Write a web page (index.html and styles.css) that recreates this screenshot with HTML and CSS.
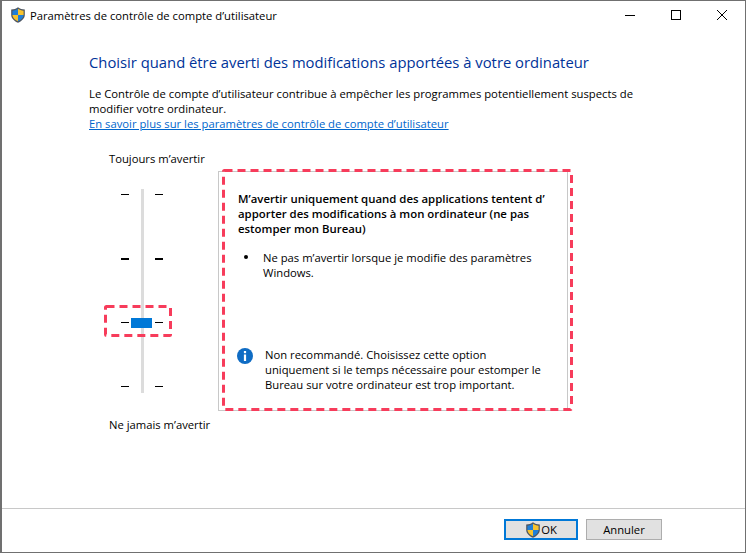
FILE: index.html
```html
<!DOCTYPE html>
<html lang="fr">
<head>
  <meta charset="UTF-8" />
  <title>Paramètres de contrôle de compte d’utilisateur</title>
  <link rel="stylesheet" href="styles.css">
</head>
<body>

  <div class="window">
    <header class="titlebar">
      <svg class="shield" viewBox="0 0 16 16" xmlns="http://www.w3.org/2000/svg">
        <path d="M8 .3 C6 1.8 4 2.4 1.2 2.6 V8 C1.2 11.5 4.5 14.2 8 15.8 C11.5 14.2 14.8 11.5 14.8 8 V2.6 C12 2.4 10 1.8 8 .3 Z" fill="#4d5560"/>
        <path d="M8 1.8 V8 H2.4 V3.7 C4.6 3.5 6.4 3 8 1.8 Z" fill="#1f7fd8"/>
        <path d="M8 1.8 C9.6 3 11.4 3.5 13.6 3.7 V8 H8 Z" fill="#f7c32e"/>
        <path d="M2.4 8 H8 V14.3 C5 12.9 2.6 10.9 2.4 8 Z" fill="#f7c32e"/>
        <path d="M8 8 H13.6 C13.4 10.9 11 12.9 8 14.3 Z" fill="#1f7fd8"/>
      </svg>
      <span class="title">Paramètres de contrôle de compte d’utilisateur</span>
      <div class="controls">
        <svg class="ctl" viewBox="0 0 10 10"><path d="M0 5.5 H10" stroke="#000" fill="none"/></svg>
        <svg class="ctl" viewBox="0 0 10 10"><rect x=".5" y=".5" width="9" height="9" stroke="#000" fill="none"/></svg>
        <svg class="ctl" viewBox="0 0 10 10"><path d="M0 0 L10 10 M10 0 L0 10" stroke="#000" fill="none"/></svg>
      </div>
    </header>

    <main class="content">
      <h1>Choisir quand être averti des modifications apportées à votre ordinateur</h1>
      <p class="intro">Le Contrôle de compte d’utilisateur contribue à empêcher les programmes potentiellement suspects de modifier votre ordinateur.</p>
      <a class="learn" href="#">En savoir plus sur les paramètres de contrôle de compte d’utilisateur</a>

      <div class="settings">
        <div class="slider">
          <div class="slider-label">Toujours m’avertir</div>
          <div class="slider-body">
            <div class="track"></div>
            <div class="ticks">
              <div class="tick-row"><i></i><i></i></div>
              <div class="tick-row bold"><i></i><i></i></div>
              <div class="tick-row"><i></i><i></i></div>
              <div class="tick-row"><i></i><i></i></div>
            </div>
            <div class="thumb"></div>
            <svg class="mark mark-thumb" viewBox="0 0 68 32"><rect x="1.5" y="1.5" width="65" height="29" rx="1"/></svg>
          </div>
          <div class="slider-label">Ne jamais m’avertir</div>
        </div>

        <section class="panel">
          <svg class="mark mark-panel" viewBox="0 0 351 242"><rect x="1.5" y="1.5" width="348" height="239" rx="1"/></svg>
          <h2>M’avertir uniquement quand des applications tentent d’ apporter des modifications à mon ordinateur (ne pas estomper mon Bureau)</h2>
          <ul>
            <li>Ne pas m’avertir lorsque je modifie des paramètres Windows.</li>
          </ul>
          <div class="note">
            <svg class="info" viewBox="0 0 16 16" xmlns="http://www.w3.org/2000/svg">
              <circle cx="8" cy="8" r="8" fill="#0f6cc4"/>
              <rect x="6.9" y="3" width="2.2" height="2.2" fill="#fff"/>
              <rect x="6.9" y="6.5" width="2.2" height="6.5" fill="#fff"/>
            </svg>
            <p>Non recommandé. Choisissez cette option uniquement si le temps nécessaire pour estomper le Bureau sur votre ordinateur est trop important.</p>
          </div>
        </section>
      </div>
    </main>

    <footer class="footer">
      <button class="btn btn-default">
        <svg class="shield" viewBox="0 0 16 16" xmlns="http://www.w3.org/2000/svg">
          <path d="M8 .3 C6 1.8 4 2.4 1.2 2.6 V8 C1.2 11.5 4.5 14.2 8 15.8 C11.5 14.2 14.8 11.5 14.8 8 V2.6 C12 2.4 10 1.8 8 .3 Z" fill="#4d5560"/>
          <path d="M8 1.8 V8 H2.4 V3.7 C4.6 3.5 6.4 3 8 1.8 Z" fill="#1f7fd8"/>
          <path d="M8 1.8 C9.6 3 11.4 3.5 13.6 3.7 V8 H8 Z" fill="#f7c32e"/>
          <path d="M2.4 8 H8 V14.3 C5 12.9 2.6 10.9 2.4 8 Z" fill="#f7c32e"/>
          <path d="M8 8 H13.6 C13.4 10.9 11 12.9 8 14.3 Z" fill="#1f7fd8"/>
        </svg>OK</button>
      <button class="btn">Annuler</button>
    </footer>
  </div>

</body>
</html>
```

FILE: styles.css
```css
/* Base */
*, *::before, *::after { box-sizing: border-box; margin: 0; padding: 0; }
html, body { height: 100%; }
body {
  font-family: 'Open Sans', sans-serif;
  font-size: 11.25px;
  color: #000;
  background: #fff;
  overflow: hidden;
}

/* Window */
.window {
  display: flex;
  flex-direction: column;
  width: 746px;
  height: 553px;
  background: #fff;
  border: 1px solid #707070;
  border-left-width: 2px;
}

/* Title bar */
.titlebar {
  display: flex;
  align-items: center;
  height: 28px;
  padding-left: 8px;
}
.titlebar .shield { width: 16px; height: 16px; margin-right: 4px; }
.title { font-size: 11.25px; flex: 1; }
.controls { display: flex; gap: 36px; padding-right: 18px; }
.ctl { width: 10px; height: 10px; display: block; }

/* Main content */
.content { flex: 1; padding: 23px 0 0 87px; }
h1 {
  font-size: 14.8px;
  font-weight: 400;
  color: #003399;
  line-height: 20px;
}
.intro { width: 570px; margin-top: 14px; font-size: 11.3px; line-height: 15px; }
.learn { display: block; line-height: 15px; color: #0066cc; }

/* Slider + description */
.settings { display: flex; margin-top: 20px; }
.slider { width: 129px; }
.slider-label { padding-left: 20px; line-height: 15px; }
.slider-body { position: relative; height: 204px; margin: 23px 0 24px; }
.track {
  width: 3px;
  height: 100%;
  margin-left: 52px;
  background: #dcdcdc;
}

/* Tick marks */
.ticks {
  position: absolute;
  top: 5px; left: 32px;
  display: flex;
  flex-direction: column;
  gap: 63px;
}
.tick-row { display: flex; gap: 26px; height: 1px; }
.tick-row i { width: 8px; height: 1px; background: #000; }
.tick-row.bold i { height: 2px; }

.thumb {
  position: absolute;
  top: 129px; left: 42px;
  width: 21px;
  height: 10px;
  background: #0078d7;
}

/* Red annotations */
.mark { position: absolute; fill: none; stroke: #f73c5b; stroke-width: 3; stroke-dasharray: 8 5; }
.mark-thumb { top: 116px; left: 15px; width: 68px; height: 32px; }
.mark-panel { top: -3px; left: 3px; width: 351px; height: 242px; }

/* Description panel */
.panel {
  position: relative;
  display: flex;
  flex-direction: column;
  width: 350px;
  height: 240px;
  margin-top: 20px;
  padding: 19px 14px 0 19px;
  border: 1px solid #c8c8c8;
}
h2 { font-size: 11.4px; font-weight: 600; line-height: 15px; }
ul { margin-top: 14px; padding-left: 6px; line-height: 15px; list-style: none; }
li { display: flex; gap: 15px; padding-right: 20px; }
li::before {
  content: "";
  flex: none;
  width: 4px;
  height: 4px;
  margin-top: 5px;
  border-radius: 50%;
  background: #000;
}
.note { display: flex; gap: 12px; margin-top: auto; margin-bottom: 18px; margin-left: -1px; line-height: 15px; }
.note p { width: 282px; }
.info { width: 16px; height: 16px; flex: none; margin-top: 1px; }

/* Footer */
.footer {
  display: flex;
  justify-content: flex-end;
  gap: 8px;
  height: 44px;
  padding: 10px 83px 0 0;
  border-top: 1px solid #c8c8c8;
}
.btn {
  width: 76px;
  height: 21px;
  font: inherit;
  color: #000;
  background: #e1e1e1;
  border: 1px solid #adadad;
}
.btn-default {
  display: flex;
  align-items: center;
  justify-content: center;
  width: 74px;
  border: 2px solid #0078d7;
}
.btn-default .shield { width: 16px; height: 16px; }
```
